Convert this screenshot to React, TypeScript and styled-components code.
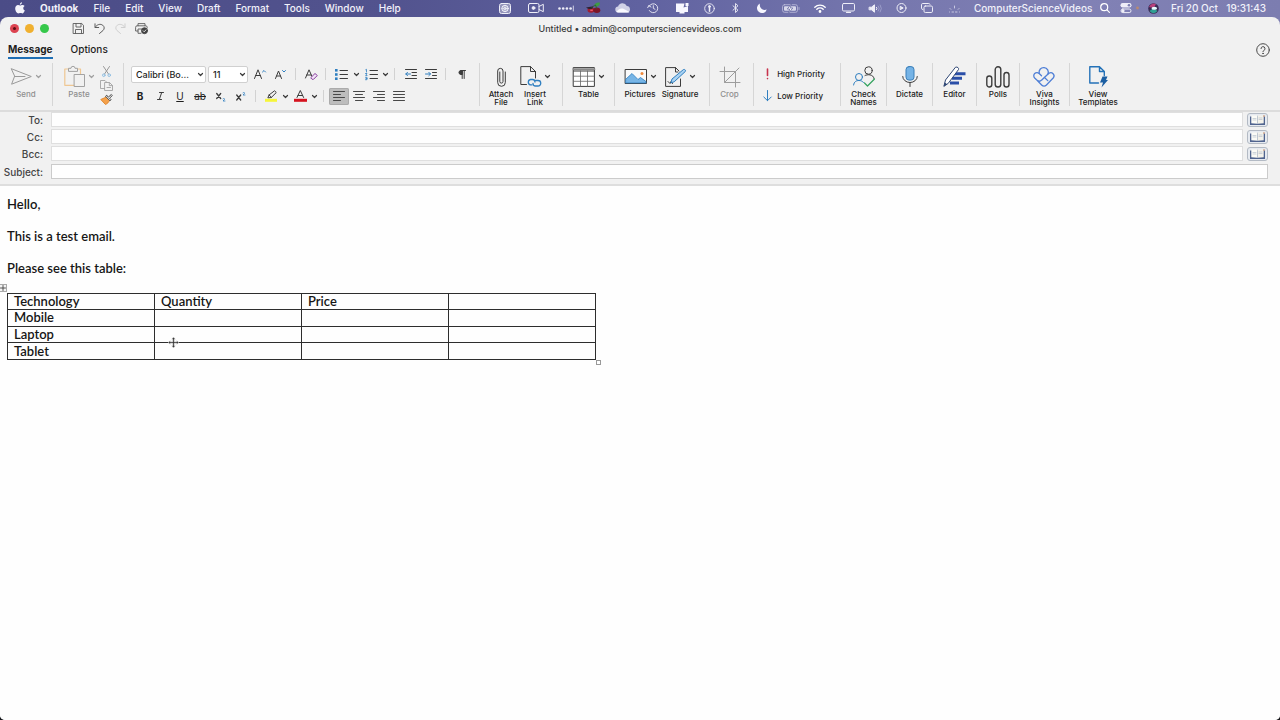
import React from "react";
import styled, { createGlobalStyle, css } from "styled-components";

const ui = `Inter, "Liberation Sans", sans-serif`;
const ink = "#3c3c3c";
const blue = "#2f7fc0";

const GlobalStyle = createGlobalStyle`
  *, *::before, *::after { box-sizing: border-box; }
  body { margin: 0; background: #17181c; font-family: ${ui}; }
  button, input, select { font: inherit; color: inherit; margin: 0; padding: 0; border: 0; background: none; }
  svg { display: block; flex: none; overflow: visible; }
`;

const Desktop = styled.div`
  min-height: 100vh;
  display: flex;
  flex-direction: column;
  background: linear-gradient(90deg, #4b4c87 0%, #52538e 30%, #6062a0 50%, #7576ad 68%, #8181b5 85%, #7c7db0 100%) top / 100% 32px no-repeat;
`;

/* macOS menu bar */
const MenuBar = styled.header`
  height: 17px;
  flex: none;
  display: flex;
  align-items: center;
  justify-content: space-between;
  padding: 0 14px 1px 15px;
  color: #f1f1fa;
  font-size: 10px;
  line-height: 16px;
  font-weight: 500;
  white-space: nowrap;
`;
const Menus = styled.nav`
  display: flex;
  align-items: center;
  gap: 15px;
`;
const MenuItem = styled.button<{ $strong?: boolean }>`
  font-weight: ${(p) => (p.$strong ? 700 : 500)};
`;
const Tray = styled.div`
  display: flex;
  align-items: center;
`;
const TrayItem = styled.button<{ $w: number }>`
  width: ${(p) => p.$w}px;
  height: 16px;
  display: flex;
  align-items: center;
  justify-content: center;
`;
const Account = styled.span`
  width: 125px;
  padding-left: 6px;
`;
const Clock = styled.time`
  width: 95px;
  display: flex;
  justify-content: space-between;
`;

/* Window chrome */
const Window = styled.main`
  flex: 1;
  display: flex;
  flex-direction: column;
  border-radius: 8px 8px 5px 5px;
  overflow: hidden;
  background: #f1f1f1;
  color: #1e1e1e;
`;
const TitleBar = styled.div`
  display: grid;
  grid-template-columns: 1fr auto 1fr;
  align-items: center;
  height: 23px;
  padding: 0 10px;
`;
const TitleLeft = styled.div`
  display: flex;
  align-items: center;
`;
const Lights = styled.div`
  display: flex;
  gap: 6px;
  margin-right: 19px;
`;
const Light = styled.button<{ $c: string }>`
  width: 9px;
  height: 9px;
  border-radius: 50%;
  background: ${(p) => p.$c};
  display: grid;
  place-items: center;
`;
const Unsaved = styled.span`
  width: 3px;
  height: 3px;
  border-radius: 50%;
  background: #5b0d14;
`;
const QuickButton = styled.button`
  width: 21px;
  height: 16px;
  display: grid;
  place-items: center;
`;
const Title = styled.h1`
  margin: 0;
  font-size: 9px;
  line-height: 16px;
  font-weight: 500;
  color: #3a3a3a;
`;
const TabBar = styled.div`
  display: flex;
  align-items: center;
  height: 19px;
  padding: 0 10px 0 8px;
  gap: 18px;
`;
const Tab = styled.button<{ $active?: boolean }>`
  height: 18px;
  line-height: 16px;
  font-size: 10px;
  font-weight: ${(p) => (p.$active ? 700 : 500)};
  border-bottom: 2px solid ${(p) => (p.$active ? "#1f6fb5" : "transparent")};
`;
const HelpButton = styled.button`
  margin-left: auto;
`;

/* Ribbon */
const Ribbon = styled.div`
  display: flex;
  padding: 4px 0;
  min-height: 53px;
  border-bottom: 2px solid #dcdcdc;
`;
const Group = styled.div<{ $w: number; $last?: boolean; $pad?: string }>`
  width: ${(p) => p.$w}px;
  min-height: 43px;
  padding: ${(p) => p.$pad ?? "0"};
  flex: none;
  display: flex;
  justify-content: center;
  border-right: 1px solid ${(p) => (p.$last ? "transparent" : "#d6d6d6")};
`;
const BigButton = styled.button<{ $dim?: boolean; $w?: number }>`
  display: flex;
  flex-direction: column;
  align-items: center;
  justify-content: flex-start;
  width: ${(p) => (p.$w ? `${p.$w}px` : "auto")};
  font-size: 8px;
  line-height: 8px;
  font-weight: 500;
  color: ${(p) => (p.$dim ? "#8f8f8f" : "#1c1c1c")};
`;
const IconRow = styled.span`
  display: flex;
  align-items: center;
  gap: 4px;
  height: 27px;
`;
const Stack = styled.div`
  display: flex;
  flex-direction: column;
  justify-content: space-between;
  margin-left: 2px;
  padding-top: 1px;
`;
const MiniButton = styled.button`
  width: 20px;
  height: 14px;
  display: grid;
  place-items: center;
`;
const FontGroup = styled(Group)`
  flex-direction: column;
  justify-content: flex-start;
  gap: 4px;
  padding: 2px 0 0 6px;
`;
const ToolRow = styled.div`
  display: flex;
  align-items: center;
  height: 18px;
`;
const Tool = styled.button<{ $on?: boolean; $wide?: boolean }>`
  width: ${(p) => (p.$wide ? 21 : 20)}px;
  height: 17px;
  display: grid;
  place-items: center;
  font-size: 10px;
  line-height: 16px;
  border-radius: 2px;
  ${(p) =>
    p.$on &&
    css`
      background: #bdbdbd;
      box-shadow: inset 0 0 0 1px #ababab;
    `}
`;
const Drop = styled.button`
  width: 9px;
  height: 16px;
  display: grid;
  place-items: center;
`;
const Rule = styled.span`
  width: 1px;
  height: 12px;
  margin: 0 5px 0 4px;
  background: #d2d2d2;
`;
const Combo = styled.label<{ $w: number }>`
  position: relative;
  width: ${(p) => p.$w}px;
  margin: 0 1px;
  select {
    display: block;
    appearance: none;
    width: 100%;
    height: 17px;
    padding-left: 4px;
    background: #fff;
    border: 1px solid #d0d0d0;
    border-radius: 2px;
    font-size: 9px;
    font-weight: 500;
  }
  svg {
    position: absolute;
    right: 3px;
    top: 7px;
    pointer-events: none;
  }
`;
const Priorities = styled.div`
  display: flex;
  flex-direction: column;
  gap: 6px;
  padding: 3px 6px 0 0;
`;
const Priority = styled.button`
  display: flex;
  align-items: center;
  gap: 5px;
  height: 16px;
  font-size: 8px;
  font-weight: 500;
  white-space: nowrap;
`;

/* Address fields */
const Fields = styled.form`
  display: flex;
  flex-direction: column;
  gap: 2px;
  padding-bottom: 5px;
  border-bottom: 2px solid #dedede;
`;
const Field = styled.div`
  display: flex;
  align-items: center;
  height: 15px;
  padding-right: 12px;
  label {
    width: 51px;
    padding-right: 8px;
    text-align: right;
    font-size: 10px;
    line-height: 14px;
    font-weight: 500;
    color: #444;
  }
  input {
    flex: 1;
    min-width: 0;
    height: 15px;
    background: #fefefe;
    border: 1px solid #dfdfdf;
    font-size: 10px;
    padding: 0 4px;
  }
`;
const SubjectField = styled(Field)`
  margin-top: 1px;
  input { border-color: #cbcbcb; }
`;
const BookButton = styled.button`
  width: 21px;
  height: 14px;
  margin-left: 4px;
  display: grid;
  place-items: center;
  background: #e6eaf0;
  border: 1px solid #b3bac4;
  border-radius: 3px;
`;

/* Message body */
const Message = styled.article`
  flex: 1;
  background: #fefefe;
  padding: 10px 7px;
  color: #161616;
  font-family: Lato, "Open Sans", sans-serif;
  font-size: 13px;
  line-height: 16px;
  font-weight: 600;
  p { margin: 0 0 16px; }
`;
const TableFrame = styled.div`
  position: relative;
  width: 589px;
  max-width: 100%;
  margin: 17px 0 0;
`;
const Grid = styled.table`
  width: 100%;
  height: 67px;
  table-layout: fixed;
  border-collapse: collapse;
  th, td {
    border: 1px solid #2d2d2d;
    padding: 0 6px;
    line-height: 15px;
    text-align: left;
    font-weight: 600;
  }
`;
const MoveHandle = styled.span`
  position: absolute;
  left: -8px;
  top: -9px;
  width: 8px;
  height: 8px;
  background: #f4f4f4;
  border: 1px solid #aaa;
  display: grid;
  place-items: center;
`;
const SizeHandle = styled.span`
  position: absolute;
  right: -5px;
  bottom: -5px;
  width: 5px;
  height: 5px;
  background: #fff;
  border: 1px solid #999;
`;
const Pointer = styled.svg`
  position: absolute;
  left: 161px;
  top: 44px;
`;

type IconProps = { w: number; h: number; c?: string; sw?: number; children: React.ReactNode };
const Icon = ({ w, h, c = ink, sw = 1, children }: IconProps) => (
  <svg width={w} height={h} viewBox={`0 0 ${w} ${h}`} fill="none" stroke={c} strokeWidth={sw} strokeLinecap="round" strokeLinejoin="round" aria-hidden="true">
    {children}
  </svg>
);
const Chevron = ({ c = ink }: { c?: string }) => (
  <Icon w={5} h={3} c={c} sw={1.2}><path d="M.5 .5 2.5 2.5 4.5 .5" /></Icon>
);

const W = "#eeeef8";
const trayIcons: { name: string; w: number; icon: React.ReactNode }[] = [
  { name: "Shortcuts", w: 30, icon: (
    <Icon w={12} h={11} c={W}>
      <rect x=".5" y=".5" width="11" height="10" rx="2" fill="rgba(255,255,255,.35)" />
      <circle cx="6" cy="5.5" r="3.2" /><circle cx="6" cy="5.5" r="1" />
      <path d="M6 2.3v2M6 6.7v2M2.8 5.5h2M7.2 5.5h2M3.8 3.3l1.3 1.3M8.2 3.3 6.9 4.6M3.8 7.7l1.3-1.3M8.2 7.7 6.9 6.4" strokeWidth=".7" />
    </Icon>) },
  { name: "Screen recorder", w: 32, icon: (
    <Icon w={16} h={10} c={W}>
      <rect x=".5" y=".5" width="10.5" height="9" rx="1.5" /><circle cx="5.5" cy="5" r="1.4" fill={W} />
      <path d="M11 3.5 15.3 1.3v7.4L11 6.5" />
    </Icon>) },
  { name: "Text input", w: 28, icon: (
    <Icon w={16} h={7} c={W}>
      <g fill={W} stroke="none"><circle cx="1.5" cy="3.5" r="1.3" /><circle cx="5.2" cy="3.5" r="1.3" /><circle cx="8.9" cy="3.5" r="1.3" /><circle cx="12.6" cy="3.5" r="1.3" /></g>
      <path d="M15.3 1v5" strokeWidth=".8" />
    </Icon>) },
  { name: "Cherry", w: 28, icon: (
    <Icon w={14} h={12} c="none">
      <path d="M7 3.5C8 .8 11 0 13 .8 13 3.500 10.500 5 8 4.800Z" fill="#3e9a45" />
      <ellipse cx="4" cy="8" rx="3.500" ry="2.700" fill="#a31d31" /><ellipse cx="9.800" cy="8.200" rx="3.500" ry="2.700" fill="#7d1527" />
      <path d="M-1 5.500 6.500 4.300 5 7.300 1 6.800Z" fill="#2b2230" /><path d="M3.300 7.500h2.500v1.500H3.300Z" fill="#ee5566" />
      <path d="M4.500 6C5.500 4.500 7 3.500 8.500 3.300M9.500 6.500C9.500 5 9 4 8.500 3.300" stroke="#31582f" strokeWidth=".8" />
    </Icon>) },
  { name: "OneDrive", w: 30, icon: (
    <Icon w={16} h={10} c="none">
      <path d="M3.500 9.500a3 3 0 0 1-.4-6A4.700 4.700 0 0 1 11.800 3a3.300 3.300 0 0 1 .7 6.500Z" fill="#d0d1e6" />
      <path d="M1.500 8.800C4 5.500 6 4.800 8.500 5.800L14.500 9A3 3 0 0 1 12.500 9.500h-9A3 3 0 0 1 1.500 8.800Z" fill="#fafaff" />
    </Icon>) },
  { name: "Time Machine", w: 30, icon: (
    <Icon w={12} h={10} c={W} sw={0.9}>
      <path d="M2.300 3A4.500 4.500 0 1 1 2.300 7.500M.7 4.700 2 2.300M2.300 3 4 4M6.300 2.700V5.300L8 6.300" />
    </Icon>) },
  { name: "Display helper", w: 28, icon: (
    <Icon w={14} h={11} c="none">
      <path d="M1 .5h8.500L8.500 4.500 13 3v6H1Z" fill="#f7f7ff" /><path d="M10.500 0h3v3h-3Z" fill="#f7f7ff" /><path d="M4.500 9h5v1.500h-5Z" fill="#f7f7ff" />
    </Icon>) },
  { name: "Passwords", w: 26, icon: (
    <Icon w={11} h={11} c={W} sw={0.9}><circle cx="5.500" cy="5.500" r="4.800" /><circle cx="5.500" cy="3.500" r="1" fill={W} /><path d="M5.500 4v4.300" strokeWidth="1.500" /></Icon>) },
  { name: "Bluetooth", w: 26, icon: (
    <Icon w={7} h={10} c={W}><path d="M1 2.800 6 7.200 3.500 9.500V.5L6 2.800 1 7.200" strokeWidth=".9" /></Icon>) },
  { name: "Focus", w: 28, icon: (
    <Icon w={10} h={10} c="none"><path d="M3 .5A5 5 0 1 0 9.800 6.500 5 5 0 0 1 3 .5Z" fill="#f7f7ff" /></Icon>) },
  { name: "Battery", w: 30, icon: (
    <Icon w={18} h={9} c="#bcbddb" sw={0.8}>
      <rect x=".5" y=".7" width="15" height="7.600" rx="2" /><rect x="2" y="2.200" width="12" height="4.600" rx="1" fill="#d7d7ea" stroke="none" /><path d="M17 3.500v2" />
      <path d="M9.300 0 5.300 5h2.400L6.700 9 10.800 4H8.500Z" fill="#fff" stroke="#6769a1" strokeWidth=".8" />
    </Icon>) },
  { name: "Wi-Fi", w: 28, icon: (
    <Icon w={12} h={9} c="#fff" sw={1.4}><path d="M.8 3.200A7.500 7.500 0 0 1 11.200 3.200M2.800 5.300A4.600 4.600 0 0 1 9.200 5.300" /><circle cx="6" cy="7.500" r=".7" fill="#fff" /></Icon>) },
  { name: "Display", w: 28, icon: (
    <Icon w={13} h={10} c={W}><rect x=".5" y=".5" width="12" height="7.500" rx="1.200" /><path d="M4.500 9.300h4" strokeWidth="1.300" /></Icon>) },
  { name: "Sound", w: 26, icon: (
    <Icon w={13} h={9} c={W}><path d="M.5 3.200h2L5.500.8v7.400L2.500 5.800h-2Z" fill={W} /><path d="M7.500 3.300a2 2 0 0 1 0 2.400" /><path d="M9.300 2a4 4 0 0 1 0 5M11.200 1a6 6 0 0 1 0 7" stroke="#a5a6cf" strokeWidth=".8" /></Icon>) },
  { name: "Now playing", w: 26, icon: (
    <Icon w={11} h={10} c={W}><circle cx="5.500" cy="5" r="4.500" /><path d="M4.500 3.500 7.200 5 4.500 6.500Z" fill={W} /></Icon>) },
  { name: "Stage Manager", w: 26, icon: (
    <Icon w={12} h={10} c={W}><rect x="3" y="3" width="8.500" height="6.500" rx="1.300" /><path d="M1.800 6.500A1.300 1.300 0 0 1 .5 5.200V1.800A1.300 1.300 0 0 1 1.800.5h6A1.300 1.300 0 0 1 9 1.300" /></Icon>) },
  { name: "Keyboard brightness", w: 28, icon: (
    <Icon w={13} h={9} c="#c9c9e2"><path d="M1.500 8h.01M4 8h1.500M7.500 8H9M11.500 8h.01M6.500 2v2M2 4.500l.8.800M11 4.500l-.8.800" /></Icon>) },
];

const lines = (x: number, y: number, ws: number[], step = 3) =>
  ws.map((w, i) => <path key={i} d={`M${x} ${y + i * step}h${w}`} />);

const Align = ({ kind }: { kind: "left" | "center" | "right" | "full" }) => {
  const widths = kind === "full" ? [11, 11, 11, 11] : [11, 7, 11, 7];
  return (
    <Icon w={12} h={10} c="#484848">
      {widths.map((w, i) => {
        const x = kind === "right" ? 11.5 - w : kind === "center" ? 6 - w / 2 : 0.5;
        return <path key={i} d={`M${x} ${0.5 + i * 3}h${w}`} />;
      })}
    </Icon>
  );
};

const Book = () => (
  <Icon w={15} h={10} c="none">
    <path d="M0 1.500h15V10H0Z" fill="#50648f" /><path d="M1.300 .5 7.500.5V8.800L1.300 8.300Z" fill="#fbfbf6" /><path d="M7.500.5 13.700 .5V8.300L7.500 8.800Z" fill="#f4f2ea" />
    <path d="M7.500 1v7.500M3 3.500h3M3 5h3M9 3h3M9 4.500h3" stroke="#b9c3ce" strokeWidth=".7" /><path d="M13.500 0h1v2h-1Z" fill="#c98f6b" />
  </Icon>
);

const AddressRow = ({ id, label }: { id: string; label: string }) => (
  <Field>
    <label htmlFor={id}>{label}</label>
    <input id={id} type="text" />
    <BookButton type="button" aria-label="Open address book"><Book /></BookButton>
  </Field>
);

const rows = [
  ["Mobile", "", "", ""],
  ["Laptop", "", "", ""],
  ["Tablet", "", "", ""],
];

export default function App() {
  return (
    <Desktop>
      <GlobalStyle />
      <MenuBar>
        <Menus>
          <MenuItem aria-label="Apple menu">
            <svg width="10" height="12" viewBox="0 0 10 12" fill="#f4f4fb">
              <path d="M7 .2C7 1.600 6 2.700 4.900 2.700 4.800 1.400 5.800.4 7 .2ZM9.600 4.100C8.700 4.700 8.300 5.300 8.300 6.200 8.300 7.400 9 8 9.800 8.400 9.300 9.900 8.300 11.400 7.300 11.400 6.500 11.400 6.200 11 5.300 11S4 11.400 3.300 11.400C2 11.400.2 9 .2 6.500.2 4.300 1.600 3.100 3 3.100 3.900 3.100 4.600 3.600 5.200 3.600 5.800 3.600 6.500 3 7.600 3 8.400 3 9.100 3.400 9.600 4.100Z" />
            </svg>
          </MenuItem>
          <MenuItem $strong>Outlook</MenuItem>
          {["File", "Edit", "View", "Draft", "Format", "Tools", "Window", "Help"].map((m) => (
            <MenuItem key={m}>{m}</MenuItem>
          ))}
        </Menus>
        <Tray>
          {trayIcons.map((t) => (
            <TrayItem key={t.name} $w={t.w} aria-label={t.name}>{t.icon}</TrayItem>
          ))}
          <Account>ComputerScienceVideos</Account>
          <TrayItem $w={24} aria-label="Spotlight search">
            <Icon w={10} h={10} c="#fff" sw={1.2}><circle cx="4.200" cy="4.200" r="3.500" /><path d="M6.900 6.900 9.400 9.400" /></Icon>
          </TrayItem>
          <TrayItem $w={18} aria-label="Control Center">
            <Icon w={18} h={10} c="none">
              <rect x="3.500" y="0" width="11" height="4.500" rx="2.200" fill="#eeeef8" /><circle cx="12" cy="2.200" r="1.300" fill="#7b7cb0" />
              <rect x="4" y="6" width="10" height="3.600" rx="1.800" stroke="#eeeef8" /><circle cx="6" cy="7.800" r="1.600" fill="#eeeef8" />
              <circle cx="20.500" cy="5" r="1.400" fill="#b98a70" />
            </Icon>
          </TrayItem>
          <TrayItem $w={36} aria-label="Siri">
            <Icon w={11} h={11} c="none">
              <circle cx="5.500" cy="5.500" r="5.300" fill="#3b2a55" /><path d="M1 4A4.800 4.800 0 0 1 8 1.300L5.500 5Z" fill="#b8407c" /><path d="M1.500 8A4.800 4.800 0 0 0 9.500 8L5.500 5Z" fill="#2f9f93" />
              <ellipse cx="6.300" cy="5.300" rx="2.800" ry="1.500" fill="#e8fbff" />
            </Icon>
          </TrayItem>
          <Clock><span>Fri 20 Oct</span><span>19:31:43</span></Clock>
        </Tray>
      </MenuBar>

      <Window>
        <TitleBar>
          <TitleLeft>
            <Lights>
              <Light $c="#dc4350" aria-label="Close"><Unsaved /></Light>
              <Light $c="#f0b02f" aria-label="Minimise" />
              <Light $c="#36c84b" aria-label="Zoom" />
            </Lights>
            <QuickButton aria-label="Save">
              <Icon w={11} h={11} c="#5c5c5c" sw={0.9}><path d="M.5 .5H8.700L10.500 2.300V10.500H.5ZM3 .5V4H8V.5M2.500 10.500V6.500H8.500V10.500" /></Icon>
            </QuickButton>
            <QuickButton aria-label="Undo">
              <Icon w={11} h={11} c="#5c5c5c"><path d="M1 .8V4.500H4.700M1.200 4.300C3 1.200 6.500.6 8.700 2.200 10.700 3.800 10.600 6 9 7.500L5.500 10.500" /></Icon>
            </QuickButton>
            <QuickButton aria-label="Redo">
              <Icon w={11} h={11} c="#cfcfcf"><path d="M10 .8V4.500H6.300M9.800 4.300C8 1.200 4.500.6 2.300 2.200.3 3.800.4 6 2 7.500L5.500 10.500" /></Icon>
            </QuickButton>
            <QuickButton aria-label="Print">
              <Icon w={13} h={11} c="#5c5c5c" sw={0.9}>
                <path d="M3 2.800V.6H10V2.800M3 8H.6V4.300A1.500 1.500 0 0 1 2.100 2.800H10.700A1.500 1.500 0 0 1 12.200 4.300V5M6 10.300H3V6H7" />
                <circle cx="9.500" cy="7.700" r="3" fill="#444" stroke="#444" /><path d="M8.200 7.800 9.200 8.800 10.900 6.900" stroke="#fff" strokeWidth=".8" />
              </Icon>
            </QuickButton>
          </TitleLeft>
          <Title>Untitled • admin@computersciencevideos.com</Title>
        </TitleBar>
        <TabBar>
          <Tab $active>Message</Tab>
          <Tab>Options</Tab>
          <HelpButton aria-label="Help">
            <Icon w={14} h={14} c="#4a4a4a"><circle cx="7" cy="7" r="6.300" /><path d="M5 5.600A2 2 0 1 1 7.700 7.500C7.200 7.800 7 8.100 7 8.700" /><circle cx="7" cy="10.500" r=".3" fill="#4a4a4a" /></Icon>
          </HelpButton>
        </TabBar>

        <Ribbon>
          <Group $w={53}>
            <BigButton $dim>
              <IconRow>
                <Icon w={21} h={17} c="#9a9a9a"><path d="M.6 .8 20.300 8.500.6 16.200 3.500 8.500ZM3.500 8.500H14" /></Icon>
                <Chevron c="#a0a0a0" />
              </IconRow>
              Send
            </BigButton>
          </Group>
          <Group $w={71} $pad="0 0 0 4px">
            <BigButton $dim>
              <IconRow>
                <Icon w={21} h={21} c="#a2a2a2">
                  <path d="M5.500 3H.8V19.300H10.500M12.500 3H16.500V8" stroke="#efc793" strokeWidth="1.200" />
                  <path d="M4.500 5V2.300H7A2 2 0 0 1 11 2.300H13.500V5Z" fill="#f1f1f1" /><rect x="10.500" y="8.500" width="10" height="12" fill="#f1f1f1" />
                </Icon>
                <Chevron c="#a0a0a0" />
              </IconRow>
              Paste
            </BigButton>
            <Stack>
              <MiniButton aria-label="Cut">
                <Icon w={9} h={11} c="#999"><path d="M1.500 .5 6.500 8M7.500 .5 2.500 8" /><circle cx="1.800" cy="9.200" r="1.300" stroke="#8fbfe3" /><circle cx="7.200" cy="9.200" r="1.300" stroke="#8fbfe3" /></Icon>
              </MiniButton>
              <MiniButton aria-label="Copy">
                <Icon w={13} h={11} c="#a2a2a2" sw={0.9}><path d="M4.500 8.500H.5V.5H5L7 2.500M5 2.500H9.500L12.500 5.500V10.500H5ZM9.300 2.700V5.600H12.300M7 7.500h3.500" /></Icon>
              </MiniButton>
              <MiniButton aria-label="Format painter">
                <Icon w={13} h={11} c="#444"><path d="M6.500 3 .8 5.500 5.500 10.500C7.500 9.500 8.500 8.500 9.500 6.500Z" fill="#f4a14b" stroke="#e08a33" /><path d="M5.800 2.500 10 6.800 11 5.700 9.500 4.200 12.300 1.500 11.300.5 8.300 3.200 7 1.500Z" fill="#fff" /></Icon>
              </MiniButton>
            </Stack>
          </Group>

          <FontGroup $w={356}>
            <ToolRow>
              <Combo $w={75}><select aria-label="Font"><option>Calibri (Bo...</option></select><Chevron /></Combo>
              <Combo $w={40}><select aria-label="Font size"><option>11</option></select><Chevron /></Combo>
              <Tool $wide aria-label="Grow font"><Icon w={12} h={10}><path d="M.5 9.500 4 .8 7.500 9.500M1.700 6.500H6.300" /><path d="M8.500 3 10 1.500 11.500 3" stroke={blue} /></Icon></Tool>
              <Tool $wide aria-label="Shrink font"><Icon w={11} h={10}><path d="M.5 9.500 3.500 2 6.500 9.500M1.600 7H5.400" /><path d="M7.500 1.500 9 3 10.500 1.500" stroke={blue} /></Icon></Tool>
              <Rule />
              <Tool aria-label="Clear formatting"><Icon w={13} h={11}><path d="M.5 9 4 .8 7 7.500M1.700 6H6" /><path d="M6 8.500 10 4.500 12.300 6.500 8.500 10.300H7.500Z" fill="#f1e3f6" stroke="#8a3fa0" /></Icon></Tool>
              <Rule />
              <Tool $wide aria-label="Bullets"><Icon w={13} h={11}>{lines(5, 1.5, [7.5, 7.5, 7.5], 4)}<g fill={blue} stroke="none"><rect y="0" width="2.600" height="2.600" /><rect y="4.200" width="2.600" height="2.600" /><rect y="8.400" width="2.600" height="2.600" /></g></Icon></Tool>
              <Drop aria-label="Bullet styles"><Chevron /></Drop>
              <Tool aria-label="Numbering"><Icon w={13} h={11}>{lines(5, 1.5, [7.5, 7.5, 7.5], 4)}<path d="M.7.7 1.500.3V3M.5 4.500H2L.7 6.500H2M.5 8.300H2V10.700H.5M1 9.500H2" stroke={blue} strokeWidth=".8" /></Icon></Tool>
              <Drop aria-label="Numbering styles"><Chevron /></Drop>
              <Rule />
              <Tool $wide aria-label="Decrease indent"><Icon w={12} h={10}><path d="M.5 .5h11M7 3.500h4.500M7 6.500h4.500M.5 9.500h11" /><path d="M5.500 5H.8M2.500 3.300.8 5 2.500 6.700" stroke={blue} /></Icon></Tool>
              <Tool aria-label="Increase indent"><Icon w={12} h={10}><path d="M.5 .5h11M7.500 3.500h4M7.500 6.500h4M.5 9.500h11" /><path d="M.5 5H5.500M3.800 3.300 5.500 5 3.800 6.700" stroke={blue} /></Icon></Tool>
              <Rule />
              <Tool $wide aria-label="Show paragraph marks"><Icon w={8} h={9}><path d="M4 4.500H3A2 2 0 0 1 3 .5H4Z" fill={ink} /><path d="M4.200 .5V8.500M6.200 .5V8.500M3 .5H7.500" /></Icon></Tool>
            </ToolRow>
            <ToolRow>
              <Tool aria-label="Bold"><b>B</b></Tool>
              <Tool aria-label="Italic"><Icon w={7} h={8}><path d="M2.500.5H6.500M.5 7.500H4.500M4.700.5 2.300 7.500" /></Icon></Tool>
              <Tool aria-label="Underline"><u>U</u></Tool>
              <Tool aria-label="Strikethrough"><s>ab</s></Tool>
              <Tool $wide aria-label="Subscript"><Icon w={10} h={9}><path d="M.7 1.500 4.700 6.500M4.700 1.500.7 6.500" strokeWidth="1.300" /><path d="M7 6.800C8 6 9 6.800 8.500 7.500L7 9H9" stroke={blue} strokeWidth=".8" /></Icon></Tool>
              <Tool aria-label="Superscript"><Icon w={10} h={9}><path d="M.7 3 4.700 8M4.700 3 .7 8" strokeWidth="1.300" /><path d="M7 .8C8 0 9 .8 8.500 1.500L7 3H9" stroke={blue} strokeWidth=".8" /></Icon></Tool>
              <Rule />
              <Tool aria-label="Highlight colour"><Icon w={13} h={12}><path d="M3 7.500 4 5 9.500.8 11.300 2.500 6.500 7.300ZM4 5 6.500 7.300" /><rect x="0" y="8.800" width="12" height="3" fill="#f5f53a" stroke="none" /></Icon></Tool>
              <Drop aria-label="Highlight colours"><Chevron /></Drop>
              <Tool aria-label="Font colour"><Icon w={13} h={12}><path d="M3 7.500 6.300.5 9.600 7.500M4 5.500H8.600" /><rect x="0" y="8.800" width="13" height="3" fill="#d5131f" stroke="none" /></Icon></Tool>
              <Drop aria-label="Font colours"><Chevron /></Drop>
              <Rule />
              <Tool $on aria-label="Align left"><Align kind="left" /></Tool>
              <Tool aria-label="Centre"><Align kind="center" /></Tool>
              <Tool aria-label="Align right"><Align kind="right" /></Tool>
              <Tool aria-label="Justify"><Align kind="full" /></Tool>
            </ToolRow>
          </FontGroup>

          <Group $w={83} $pad="0 6px 0 0">
            <BigButton $w={34}>
              <IconRow>
                <Icon w={9} h={20}><path d="M2.800 5V14.500A1.600 1.600 0 0 0 6 14.500V4A2.600 2.600 0 0 0 .7 4V15.500A3.800 3.800 0 0 0 8.300 15.500V5" /></Icon>
              </IconRow>
              Attach<br />File
            </BigButton>
            <BigButton $w={34}>
              <IconRow>
                <Icon w={21} h={21}>
                  <path d="M6.500 18.500H.8V.6H10.500L15.500 5.500V12M10.500.6V5.500H15.500" />
                  <g stroke={blue} strokeWidth="1.300"><path d="M12 18.800H10.500A2.700 2.700 0 0 1 10.500 13.500H12.500A2.500 2.500 0 0 1 15 16" /><path d="M15.500 14.500H18A2.600 2.600 0 0 1 18 20H15.500A2.500 2.500 0 0 1 13 17.500" /></g>
                </Icon>
                <Chevron />
              </IconRow>
              Insert<br />Link
            </BigButton>
          </Group>
          <Group $w={52}>
            <BigButton>
              <IconRow>
                <Icon w={22} h={20}><rect x=".6" y=".6" width="20.800" height="18.800" fill="#fff" /><path d="M.6 4H21.400" /><path d="M.6 2.300H21.400" stroke="#8a8a8a" strokeWidth="2" /><path d="M.6 9.200H21.400M.6 14.300H21.400M7.500 4V19.400M14.500 4V19.400" stroke="#666" strokeWidth=".8" /></Icon>
                <Chevron />
              </IconRow>
              Table
            </BigButton>
          </Group>
          <Group $w={95} $pad="0 4px 0 0">
            <BigButton $w={40}>
              <IconRow>
                <Icon w={22} h={15}><rect x=".5" y=".5" width="21" height="14" fill="#fafafa" /><path d="M1 10 7 4.500 13 10.500 15.500 8.500 21 12.500V14H1Z" fill="#77b5e6" stroke={blue} strokeWidth=".8" /><circle cx="17" cy="4.500" r="1.500" fill="#f0883a" stroke="none" /></Icon>
                <Chevron />
              </IconRow>
              Pictures
            </BigButton>
            <BigButton $w={40}>
              <IconRow>
                <Icon w={21} h={20}><path d="M15.500 12V19.400H.6V.6H10.500L14 4M10.500.6V5H13M3 14.500l2 2 1-2 1.500 2" /><path d="M6 15.500 7 12 18.500 2.500C20 2 21 3.500 20.300 4.500L9.500 14.500Z" fill="#a9d2f2" stroke={blue} /></Icon>
                <Chevron />
              </IconRow>
              Signature
            </BigButton>
          </Group>
          <Group $w={44} $pad="0 4px 0 0">
            <BigButton $dim>
              <IconRow>
                <Icon w={20} h={20} c="#9d9d9d"><path d="M4.500 0V15.500H20M0 4.500H15.500V20M4.500 15.500 19 1" /></Icon>
              </IconRow>
              Crop
            </BigButton>
          </Group>
          <Group $w={87}>
            <Priorities>
              <Priority><Icon w={9} h={12} c="#c8334d" sw={1.6}><path d="M4.500 1V7.500M4.500 10.500v.1" /></Icon>High Priority</Priority>
              <Priority><Icon w={9} h={12} c={blue}><path d="M4.500 .5V10.500M.8 7 4.500 10.700 8.200 7" /></Icon>Low Priority</Priority>
            </Priorities>
          </Group>
          <Group $w={46}>
            <BigButton>
              <IconRow>
                <Icon w={22} h={21}>
                  <circle cx="15.500" cy="4.500" r="3.700" /><path d="M12 9.500C14 8.200 20.500 8 21 12.500" />
                  <circle cx="6" cy="11" r="3.500" stroke={blue} /><path d="M.6 19C1 15.500 3.500 14.500 6 14.500 8 14.500 9.500 15.300 10.500 16.500" stroke={blue} />
                  <path d="M11.500 17 14.500 20 21.500 13" stroke="#35a35f" strokeWidth="1.200" />
                </Icon>
              </IconRow>
              Check<br />Names
            </BigButton>
          </Group>
          <Group $w={46}>
            <BigButton>
              <IconRow>
                <Icon w={16} h={21}><rect x="4" y=".6" width="8" height="13.500" rx="3" fill="#75b3e6" stroke="#3a7fb9" /><path d="M.7 10.500A7.300 6 0 0 0 15.300 10.500M8 16.500V20.500" /></Icon>
              </IconRow>
              Dictate
            </BigButton>
          </Group>
          <Group $w={44}>
            <BigButton>
              <IconRow>
                <Icon w={23} h={21}>
                  <path d="M11 7.700H22.500M9 12.300H19M7 17H16" stroke="#2b4fa8" strokeWidth="3" strokeLinecap="butt" />
                  <path d="M1 20 2.500 14 12.500 1.200C14.500.6 16 2 15.500 3.500L5.500 17Z" fill="#fff" stroke="#2e4674" /><path d="M.7 20.300 1.800 16.500 4.200 18.300Z" fill="#2e4674" stroke="none" />
                </Icon>
              </IconRow>
              Editor
            </BigButton>
          </Group>
          <Group $w={43}>
            <BigButton>
              <IconRow>
                <Icon w={24} h={22} sw={1.4}><rect x=".8" y="10" width="5" height="11" rx="2.500" /><rect x="9.200" y=".8" width="5.600" height="20.200" rx="2.800" /><rect x="18" y="6.500" width="5" height="14.500" rx="2.500" /></Icon>
              </IconRow>
              Polls
            </BigButton>
          </Group>
          <Group $w={50}>
            <BigButton>
              <IconRow>
                <Icon w={22} h={20} c="#4f7fd6" sw={1.3}>
                  <path d="M14.800 7.200 8.500 13.200A2.900 2.900 0 0 1 4 13.200L1.700 11A3.100 3.100 0 0 1 6.200 6.500L8.500 8.800" />
                  <path d="M6.300 6.500A4.600 4.600 0 1 1 14.800 7.200M14.800 7.200 16 6.300A3.200 3.200 0 0 1 20.400 10.800L13.200 18.200A3 3 0 0 1 8.900 18.200L5 14.200M11.500 10.500 14.800 13.600" />
                </Icon>
              </IconRow>
              Viva<br />Insights
            </BigButton>
          </Group>
          <Group $w={57} $last>
            <BigButton>
              <IconRow>
                <Icon w={19} h={21} c="#2472b8" sw={1.4}><path d="M9.500 17H.8V.8H10.500L15.300 5.500V9.500M10.500.8V5.500H15.300" /><path d="M13.500 10.500H18.500L17 14H19L12.500 21.500 14 16.500H11Z" fill="#1c5fa3" stroke="none" /></Icon>
              </IconRow>
              View<br />Templates
            </BigButton>
          </Group>
        </Ribbon>

        <Fields>
          <AddressRow id="to" label="To:" />
          <AddressRow id="cc" label="Cc:" />
          <AddressRow id="bcc" label="Bcc:" />
          <SubjectField>
            <label htmlFor="subject">Subject:</label>
            <input id="subject" type="text" />
          </SubjectField>
        </Fields>

        <Message>
          <p>Hello,</p>
          <p>This is a test email.</p>
          <p>Please see this table:</p>
          <TableFrame>
            <MoveHandle><Icon w={6} h={6} c="#444" sw={0.9}><path d="M3 .5v5M.5 3h5" /></Icon></MoveHandle>
            <Grid>
              <thead>
                <tr><th>Technology</th><th>Quantity</th><th>Price</th><th></th></tr>
              </thead>
              <tbody>
                {rows.map((r) => (
                  <tr key={r[0]}>{r.map((c, i) => <td key={i}>{c}</td>)}</tr>
                ))}
              </tbody>
            </Grid>
            <SizeHandle />
            <Pointer width="11" height="11" viewBox="0 0 11 11" aria-hidden="true">
              <path d="M5.500 0 7.500 2.300H6.300V4.700H8.700V3.500L11 5.500 8.700 7.500V6.300H6.300V8.700H7.500L5.500 11 3.500 8.700H4.700V6.300H2.300V7.500L0 5.500 2.300 3.500V4.700H4.700V2.300H3.500Z" fill="#3a3a3a" stroke="#fff" strokeWidth=".5" />
            </Pointer>
          </TableFrame>
        </Message>
      </Window>
    </Desktop>
  );
}
